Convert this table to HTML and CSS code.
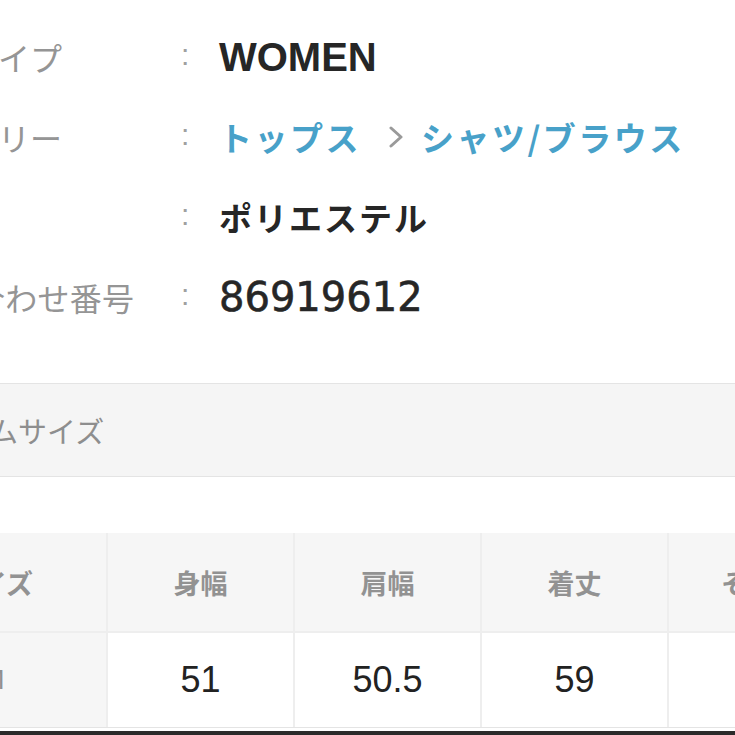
FILE: index.html
```html
<!DOCTYPE html>
<html lang="ja">
<head>
<meta charset="utf-8">
<title>商品情報</title>
<link rel="stylesheet" href="styles.css">
</head>
<body>
<div class="page">
  <dl class="info">
    <div class="row">
      <dt class="label">性別タイプ</dt>
      <dd class="colon">:</dd>
      <dd class="value"><span class="latin">WOMEN</span></dd>
    </div>
    <div class="row">
      <dt class="label">カテゴリー</dt>
      <dd class="colon">:</dd>
      <dd class="value crumbs">
        <a class="link" href="#">トップス</a>
        <svg class="chev" width="14" height="22" viewBox="0 0 14 22"><path d="M2 2 L12 11 L2 20" fill="none" stroke="#9a9a9a" stroke-width="3" stroke-linecap="round" stroke-linejoin="round"/></svg>
        <a class="link" href="#">シャツ/ブラウス</a>
      </dd>
    </div>
    <div class="row">
      <dt class="label">素材</dt>
      <dd class="colon">:</dd>
      <dd class="value">ポリエステル</dd>
    </div>
    <div class="row">
      <dt class="label label-long">お問い合わせ番号</dt>
      <dd class="colon">:</dd>
      <dd class="value"><span class="digits">86919612</span></dd>
    </div>
  </dl>

  <div class="section-bar">アイテムサイズ</div>

  <div class="size-table">
    <div class="th">サイズ</div>
    <div class="th">身幅</div>
    <div class="th">肩幅</div>
    <div class="th">着丈</div>
    <div class="th">そで丈</div>
    <div class="td td-head">M</div>
    <div class="td">51</div>
    <div class="td">50.5</div>
    <div class="td">59</div>
    <div class="td"></div>
  </div>
  <div class="edge"></div>
</div>
</body>
</html>
```
FILE: styles.css
```css
html, body {
  margin: 0;
  padding: 0;
  background: #fff;
  overflow: hidden;
}
body {
  width: 735px;
  height: 735px;
  font-family: "Noto Sans CJK JP", "Liberation Sans", sans-serif;
}
.page {
  margin-left: -120px;
  width: 855px;
  padding-top: 17px;
}
.info {
  margin: 0;
  padding-left: 22px;
}
.row {
  display: grid;
  grid-template-columns: 279px 38px 1fr;
  height: 80px;
  align-items: center;
}
.label {
  font-size: 32px;
  color: #959595;
  white-space: nowrap;
  line-height: 1;
}
.label-long {
  margin-left: -26px;
  letter-spacing: 0.3px;
}
.colon {
  margin: 0;
  font-family: "Liberation Sans", sans-serif;
  font-size: 30px;
  color: #a0a0a0;
  line-height: 1;
  position: relative;
  top: -2px;
}
.value {
  margin: 0;
  font-size: 33px;
  letter-spacing: 2px;
  font-weight: 700;
  color: #262626;
  white-space: nowrap;
  line-height: 1;
  display: flex;
  align-items: center;
}
.latin {
  font-family: "Liberation Sans", sans-serif;
  font-size: 40px;
  letter-spacing: 0;
  font-weight: 700;
}
.digits {
  font-family: "DejaVu Sans", sans-serif;
  font-size: 40px;
  font-weight: 400;
  letter-spacing: 0;
  -webkit-text-stroke: 0.6px #262626;
}
.link {
  color: #48a1c9;
  text-decoration: none;
  letter-spacing: 2.5px;
}
.chev {
  margin: 0 18px 0 28px;
  flex: none;
}
.section-bar {
  margin-top: 46px;
  height: 92px;
  border-top: 1px solid #e4e4e4;
  border-bottom: 1px solid #e4e4e4;
  background: #f5f5f5;
  padding-left: 25px;
  display: flex;
  align-items: center;
  font-size: 29px;
  color: #8e8e8e;
}
.size-table {
  margin-top: 56px;
  display: grid;
  grid-template-columns: 226px repeat(4, 185px);
  grid-template-rows: 98px 94px;
  gap: 2px;
  background: #eeeeee;
  border-bottom: 1px solid #e4e4e4;
}
.th {
  background: #f6f6f6;
  display: flex;
  align-items: center;
  justify-content: center;
  font-size: 27px;
  font-weight: 700;
  color: #929292;
}
.td {
  background: #fff;
  display: flex;
  align-items: center;
  justify-content: center;
  font-family: "Liberation Sans", sans-serif;
  font-size: 36px;
  color: #222;
}
.td-head {
  background: #f6f6f6;
  font-size: 28px;
  color: #909090;
}
.edge {
  margin-top: 3px;
  height: 4px;
  background: #2b2b2b;
}
```
